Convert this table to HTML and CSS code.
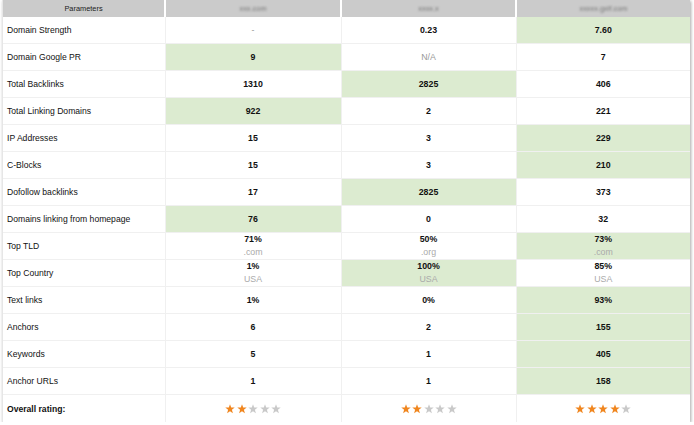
FILE: index.html
```html
<!DOCTYPE html>
<html>
<head>
<meta charset="utf-8">
<link rel="stylesheet" href="styles.css">
</head>
<body>
<div class="wrap">
<table class="cmp">
<colgroup><col class="c1"><col class="c2"><col class="c3"><col class="c4"></colgroup>
<thead>
<tr><th>Parameters</th><th><span class="blur">xxx.com</span></th><th><span class="blur">xxxx.x</span></th><th><span class="blur">xxxxx.gxlf.com</span></th></tr>
</thead>
<tbody>
<tr><td class="lbl">Domain Strength</td><td class="na">-</td><td>0.23</td><td class="best">7.60</td></tr>
<tr><td class="lbl">Domain Google PR</td><td class="best">9</td><td class="na">N/A</td><td>7</td></tr>
<tr><td class="lbl">Total Backlinks</td><td>1310</td><td class="best">2825</td><td>406</td></tr>
<tr><td class="lbl">Total Linking Domains</td><td class="best">922</td><td>2</td><td>221</td></tr>
<tr><td class="lbl">IP Addresses</td><td>15</td><td>3</td><td class="best">229</td></tr>
<tr><td class="lbl">C-Blocks</td><td>15</td><td>3</td><td class="best">210</td></tr>
<tr><td class="lbl">Dofollow backlinks</td><td>17</td><td class="best">2825</td><td>373</td></tr>
<tr><td class="lbl">Domains linking from homepage</td><td class="best">76</td><td>0</td><td>32</td></tr>
<tr><td class="lbl">Top TLD</td><td><div class="two">71%<span class="sub">.com</span></div></td><td><div class="two">50%<span class="sub">.org</span></div></td><td class="best"><div class="two">73%<span class="sub">.com</span></div></td></tr>
<tr><td class="lbl">Top Country</td><td><div class="two">1%<span class="sub">USA</span></div></td><td class="best"><div class="two">100%<span class="sub">USA</span></div></td><td><div class="two">85%<span class="sub">USA</span></div></td></tr>
<tr><td class="lbl">Text links</td><td>1%</td><td>0%</td><td class="best">93%</td></tr>
<tr><td class="lbl">Anchors</td><td>6</td><td>2</td><td class="best">155</td></tr>
<tr><td class="lbl">Keywords</td><td>5</td><td>1</td><td class="best">405</td></tr>
<tr><td class="lbl">Anchor URLs</td><td>1</td><td>1</td><td class="best">158</td></tr>
<tr class="rating"><td class="lbl strong">Overall rating:</td>
<td><div class="stars"><svg class="st on" viewBox="0 0 10 10"><path d="M5 0.3L6.2 3.6H9.7L6.9 5.7L7.9 9.3L5 7.2L2.1 9.3L3.1 5.7L0.3 3.6H3.8Z"/></svg><svg class="st on" viewBox="0 0 10 10"><path d="M5 0.3L6.2 3.6H9.7L6.9 5.7L7.9 9.3L5 7.2L2.1 9.3L3.1 5.7L0.3 3.6H3.8Z"/></svg><svg class="st" viewBox="0 0 10 10"><path d="M5 0.3L6.2 3.6H9.7L6.9 5.7L7.9 9.3L5 7.2L2.1 9.3L3.1 5.7L0.3 3.6H3.8Z"/></svg><svg class="st" viewBox="0 0 10 10"><path d="M5 0.3L6.2 3.6H9.7L6.9 5.7L7.9 9.3L5 7.2L2.1 9.3L3.1 5.7L0.3 3.6H3.8Z"/></svg><svg class="st" viewBox="0 0 10 10"><path d="M5 0.3L6.2 3.6H9.7L6.9 5.7L7.9 9.3L5 7.2L2.1 9.3L3.1 5.7L0.3 3.6H3.8Z"/></svg></div></td>
<td><div class="stars"><svg class="st on" viewBox="0 0 10 10"><path d="M5 0.3L6.2 3.6H9.7L6.9 5.7L7.9 9.3L5 7.2L2.1 9.3L3.1 5.7L0.3 3.6H3.8Z"/></svg><svg class="st on" viewBox="0 0 10 10"><path d="M5 0.3L6.2 3.6H9.7L6.9 5.7L7.9 9.3L5 7.2L2.1 9.3L3.1 5.7L0.3 3.6H3.8Z"/></svg><svg class="st" viewBox="0 0 10 10"><path d="M5 0.3L6.2 3.6H9.7L6.9 5.7L7.9 9.3L5 7.2L2.1 9.3L3.1 5.7L0.3 3.6H3.8Z"/></svg><svg class="st" viewBox="0 0 10 10"><path d="M5 0.3L6.2 3.6H9.7L6.9 5.7L7.9 9.3L5 7.2L2.1 9.3L3.1 5.7L0.3 3.6H3.8Z"/></svg><svg class="st" viewBox="0 0 10 10"><path d="M5 0.3L6.2 3.6H9.7L6.9 5.7L7.9 9.3L5 7.2L2.1 9.3L3.1 5.7L0.3 3.6H3.8Z"/></svg></div></td>
<td><div class="stars"><svg class="st on" viewBox="0 0 10 10"><path d="M5 0.3L6.2 3.6H9.7L6.9 5.7L7.9 9.3L5 7.2L2.1 9.3L3.1 5.7L0.3 3.6H3.8Z"/></svg><svg class="st on" viewBox="0 0 10 10"><path d="M5 0.3L6.2 3.6H9.7L6.9 5.7L7.9 9.3L5 7.2L2.1 9.3L3.1 5.7L0.3 3.6H3.8Z"/></svg><svg class="st on" viewBox="0 0 10 10"><path d="M5 0.3L6.2 3.6H9.7L6.9 5.7L7.9 9.3L5 7.2L2.1 9.3L3.1 5.7L0.3 3.6H3.8Z"/></svg><svg class="st on" viewBox="0 0 10 10"><path d="M5 0.3L6.2 3.6H9.7L6.9 5.7L7.9 9.3L5 7.2L2.1 9.3L3.1 5.7L0.3 3.6H3.8Z"/></svg><svg class="st" viewBox="0 0 10 10"><path d="M5 0.3L6.2 3.6H9.7L6.9 5.7L7.9 9.3L5 7.2L2.1 9.3L3.1 5.7L0.3 3.6H3.8Z"/></svg></div></td>
</tr>
</tbody>
</table>
</div>
</body>
</html>
```

FILE: styles.css
```css
html, body {
  margin: 0;
  padding: 0;
  background: #fff;
}
body {
  font-family: "Liberation Sans", Arial, sans-serif;
  font-size: 8.6px;
  color: #111;
}
.wrap {
  margin-left: 2px;
  width: 688px;
  box-shadow: 1px 1px 3px rgba(0, 0, 0, 0.35);
  border-left: 1px solid #e6e6e6;
  box-sizing: border-box;
}
.cmp {
  width: 100%;
  border-collapse: collapse;
  table-layout: fixed;
}
.c1 { width: 162px; }
.c2 { width: 176px; }
.c3 { width: 175px; }
.c4 { width: 174px; }
.cmp th {
  background: #cbcbcb;
  height: 17px;
  padding: 0;
  font-weight: normal;
  font-size: 7.4px;
  color: #222;
  text-align: center;
  border-left: 2px solid #fff;
}
.cmp th:first-child { border-left: none; }
.blur {
  color: #777;
  filter: blur(1px);
}
.cmp td {
  height: 26px;
  padding: 0;
  text-align: center;
  font-weight: bold;
  font-size: 8.8px;
  border-bottom: 1px solid #f0f0f0;
  border-left: 1px solid #f0f0f0;
}
.cmp td.lbl {
  text-align: left;
  font-weight: normal;
  font-size: 8.6px;
  padding-left: 4px;
  border-left: none;
}
.cmp td.strong { font-weight: bold; }
.cmp td.na {
  font-weight: normal;
  color: #999;
}
.cmp td.best { background: #dcebd0; }
.two {
  display: flex;
  flex-direction: column;
  align-items: center;
  line-height: 13px;
}
.sub {
  font-weight: normal;
  color: #aaa;
}
.rating td { border-bottom: none; height: 27px; }
.stars {
  display: flex;
  justify-content: center;
  gap: 1.5px;
}
.st {
  width: 10px;
  height: 10px;
  fill: #c9c9c9;
}
.st.on { fill: #f0861f; }
```
